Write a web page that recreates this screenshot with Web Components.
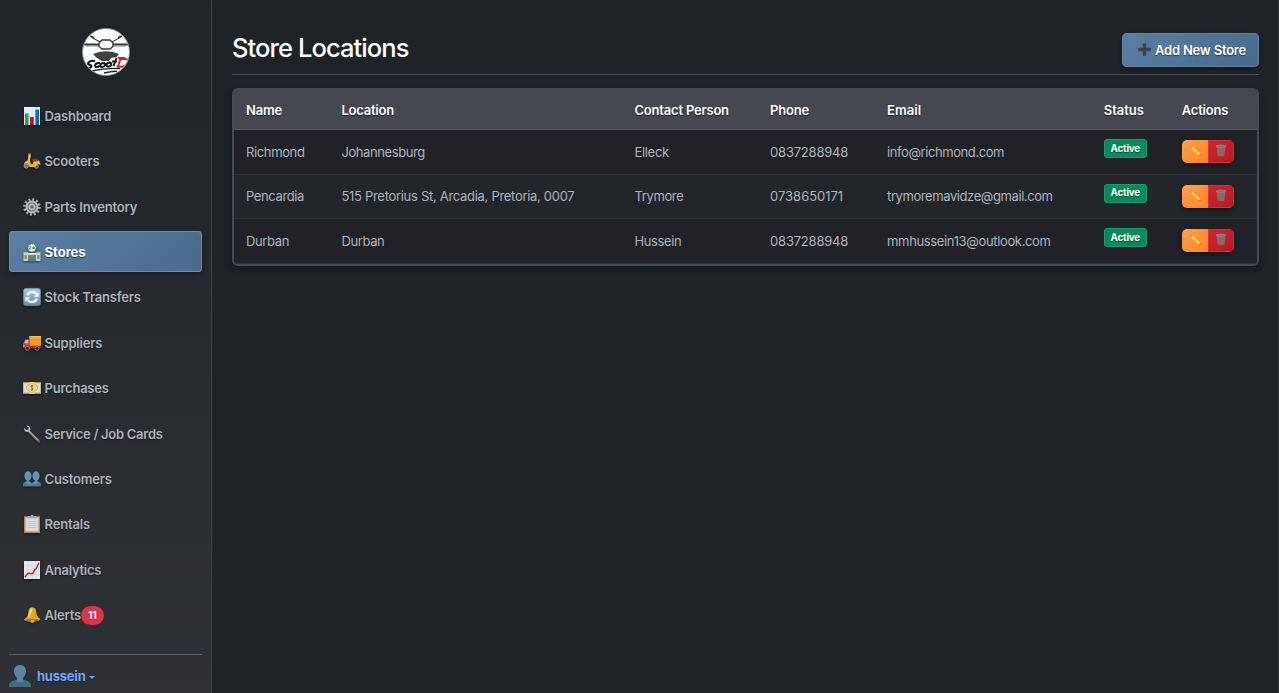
<!DOCTYPE html>
<html lang="en">
<head>
<meta charset="utf-8">
<title>Store Locations</title>
<style>
html,body{margin:0;height:100%;background:#1e2327;overflow:hidden}
body{font-family:Inter,"Liberation Sans",sans-serif;font-size:13px;color:#adb5bd}
</style>
</head>
<body>
<store-app></store-app>
<script>
const ICONS = {
bars:`<path fill="#e9eef5" d="M1 0h16v18H1z"/><path stroke="#c5ceda" stroke-width=".4" d="M1 4h16M1 8h16M1 12h16"/><path fill="#18b04b" d="M2 6.5h3.6V18H2z"/><path fill="#c8102e" d="M7 10h3.8v8H7z"/><path fill="#1861bd" d="M12.4 2.5H16V18h-3.6z"/>`,
scooter:`<circle cx="3.2" cy="14" r="2.1" fill="#666" stroke="#c9c9c9" stroke-width=".8"/><circle cx="13.3" cy="14.3" r="2" fill="#555" stroke="#bbb" stroke-width=".7"/><path d="M5 2.4 7.8 1.6M6.6 2.6 5.2 9 4 12" stroke="#9c7a36" stroke-width="1.2" fill="none"/><path fill="#f2b632" d="M5.6 2.6 8 2.5 7 8.2 7.8 12.2 10 12c0-2.4 1-4.3 3-4.5 2.6-.2 4.4 2.4 4.6 5.2L15 12.3 12 15H6.6L4.7 11.2 1 12.3c.4-2.3 2-3.4 3.6-3.7z"/><path fill="#7d3c20" d="M9 7.2c2-.8 4.5-1 6.6.5l-1 1.6-5 .2z"/><path fill="#fff2b0" d="M6 3.2h1.2v1.6H5.8z"/>`,
gear:`<circle cx="9" cy="9" r="7.5" fill="none" stroke="#a9b0b5" stroke-width="2.6" stroke-dasharray="2 1.93"/><circle cx="9" cy="9" r="5.5" fill="#60676c" stroke="#b8bec2" stroke-width="2"/><circle cx="9" cy="9" r="2.4" fill="#555b60" stroke="#c5c9cc" stroke-width="1.5"/><path d="M9 3.5v3.3M9 11.2v3.3M3.5 9h3.3M11.2 9h3.3" stroke="#aab0b4"/>`,
store:`<circle cx="9" cy="4.8" r="4.2" fill="#f7fbf6" stroke="#3c9b5a" stroke-width="1.1"/><path d="M6.2 4q1.5-1 1.5.3L6.2 6h1.7M10.8 3.2 9.4 5.4h2.2M11 4v2.4" stroke="#267c43" stroke-width=".9" fill="none"/><path fill="#d4d1b9" d="M.5 9.2h4l1 1h7l1-1h4V18H.5z"/><path fill="#4f6771" d="M5.3 12h7.4v6H5.3z"/><path stroke="#9eb4bc" stroke-width=".6" d="M7.2 12v6M9 12v6M10.8 12v6"/><path fill="#798184" d="M1.6 12h2v4h-2zM14.4 12h2v4h-2z"/><path fill="#eeead4" d="M4.6 10h8.8v1.6H4.6z"/>`,
sync:`<defs><linearGradient id="g" x2="0" y2="1"><stop stop-color="#a9cbe2"/><stop offset="1" stop-color="#5f8fb1"/></linearGradient></defs><rect x=".3" y=".3" width="17.4" height="17.4" rx="3" fill="url(#g)" stroke="#5d87a4" stroke-width=".5"/><g fill="none" stroke="#fff" stroke-width="2.1"><path d="M4.2 7.4a5.2 5.2 0 0 1 9-1.6M13.8 10.6a5.2 5.2 0 0 1-9 1.6"/></g><path fill="#fff" d="M15.6 4.2v4.6h-4.7zM2.4 13.8V9.2h4.7z"/>`,
truck:`<path fill="#f4a12c" d="M6.3 2H18v11H6.3z"/><path fill="#ffc05b" d="M6.3 2H18v1.4H6.3z"/><path stroke="#d37c1b" stroke-width=".5" d="M7 6h10.5M7 9h10.5"/><path fill="#e23b30" d="M2.2 5.2h4.5V14H0V9.8z"/><path fill="#9bd5e9" d="M2.8 6.1h2.5v3.1H1.4z"/><path fill="#d51f20" d="M0 11.6h18v2.6H0z"/><path fill="#f7d9b8" d="M0 11.4h1.6v1.1H0z"/><circle cx="4.3" cy="14.4" r="2" fill="#272a2d" stroke="#919aa0" stroke-width=".8"/><circle cx="14" cy="14.4" r="2" fill="#272a2d" stroke="#919aa0" stroke-width=".8"/>`,
money:`<path fill="#b9b99e" d="M0 3.2h18v11.6H0z"/><path fill="#e0dfc8" d="M.9 4.3h16.2v9H.9z"/><ellipse cx="9" cy="8.8" rx="6.2" ry="4.2" fill="#a7ad91"/><ellipse cx="9" cy="8.8" rx="5.2" ry="3.5" fill="#d8dac7"/><path fill="#f6cd55" d="M6.2 3h5.6v12H6.2z"/><circle cx="9" cy="8.8" r="2.6" fill="#ffeaa0"/><path d="M10.5 7.2c-3-1.4-3.8 1-1.5 1.6s1.5 2.8-1.5 1.6M9 6v5.7" stroke="#6c5724" stroke-width=".8" fill="none"/>`,
wrench:`<path d="m6.2 6.6 9.6 9.5" stroke="#777e84" stroke-width="2.5" stroke-linecap="round"/><path d="m6 6.1 9.4 9.3" stroke="#b4babd" stroke-width=".9"/><path d="M1 2.7 3.4 5l1.8-.5.4-1.8L3.5.7C6 .4 8 2.4 7.3 4.9L5.4 6.8C3 7.7.5 5.6 1 2.7z" fill="#aeb7bd"/><circle cx="16.1" cy="16.4" r="1.1" fill="#7c4e50"/>`,
people:`<g fill="#6292b4"><ellipse cx="5" cy="6" rx="3.6" ry="4.7"/><ellipse cx="13" cy="6" rx="3.6" ry="4.7"/><path d="M3.6 9h2.8v2.4c1.6.7 2.3 1 2.6 2 .3-1 1-1.3 2.6-2V9h2.8v2.4c2.8 1 3.6 1.5 3.6 4.8H0c0-3.3.8-3.8 3.6-4.8z"/></g><path d="M0 16.2c0-2.2.7-3.2 2.3-4 2 2.4 4.8 2 6.7.8 2 1.2 4.8 1.5 6.7-.8 1.7.8 2.3 1.8 2.3 4z" fill="#477b9f"/>`,
clipboard:`<path fill="#b28a62" d="M1 1.2h16V18H1z"/><path fill="#d9dbde" d="M2.5 2.5h13v14h-13z"/><path fill="#c3c6c9" d="M5 6h8v1H5zm0 2h8v1H5zm0 2h8v1H5zm0 2h8v1H5z"/><path fill="#a3aaae" d="M4.8 1.3h2.7a1.5 1.5 0 0 1 3 0h2.7v2.2H4.8z"/>`,
chart:`<path fill="#e3e9ee" d="M1 0h16v18H1z"/><path stroke="#bdc8d1" stroke-width=".4" d="M1 4.5h16M1 9h16M1 13.5h16M5 0v18M9 0v18M13 0v18"/><path d="m1.8 16.2 3-3.9 5 .3 2-4.2 1.4-.6 2.7-6" fill="none" stroke="#c91f32" stroke-width="1.4"/>`,
bell:`<path fill="#dfa62c" d="M9.3 1.2c2.7.1 3.6 1.9 3.9 4.7.4 3.4 1.1 4.7 3.7 6.5.6.5.3 1-.4 1.5-3.8 2.2-10.3 2.2-14.8.5-.8-.4-.7-1 0-1.4C4.2 11.3 5 9.5 5.3 6 5.6 2.8 6.8 1.1 9.3 1.2z"/><path fill="#ffe393" d="M8 2.6C6.6 4 6.7 8.3 5.2 11.7c2-1.8 3.3-5.2 4.1-8.8z"/><ellipse cx="9.2" cy="14.1" rx="7" ry="1.3" fill="#a87018"/><ellipse cx="9.4" cy="15.5" rx="2" ry="1.4" fill="#d9a640"/>`,
user:`<path fill="#5b86a0" d="M9 0c3.2 0 4.9 2.3 4.9 5.2 0 2.3-.9 4.3-2.4 5.3v1.7c4.5.8 6.5 2 6.5 5.8H0c0-3.8 2-5 6.5-5.8v-1.7C5 9.500 4.100 7.500 4.100 5.200 4.100 2.300 5.800 0 9 0z"/><path fill="#426b84" d="M0 18c0-3 1-4.300 4.300-5.300 2.900 2 6.500 2 9.400 0C17 13.700 18 15 18 18z"/>`,
plus:`<path fill="#3e4448" d="M7 2.300q0-.8.8-.8h2.400q.8 0 .8.800V7h4.700q.8 0 .8.800v2.400q0 .8-.8.800H11v4.700q0 .8-.8.800H7.800q-.8 0-.8-.8V11H2.300q-.8 0-.8-.8V7.800q0-.8.800-.8H7z"/>`,
pencil:`<path fill="#f4c23d" d="m5.300 2.900 10.500 9.500-3.200 3.100L2.500 5.500z"/><path stroke="#ffe48a" stroke-width="1.200" d="m4.800 4.500 9.500 9"/><path fill="#d88491" d="M1.200 3.300q-.4-1.500 1.300-2.100 1.200-.2 2 .8L1.900 4.700z"/><path fill="#9ba9ad" d="M3.700 1.500 5.700 3.300 2.900 6 1.200 4.200z"/><path fill="#edca9a" d="m15.800 12.400 1.300 4.200-4.500-1.100z"/><path fill="#333" d="m16.600 15 .6 1.800-1.800-.5z"/>`,
trash:`<path fill="#965c63" d="M2.200 3h13.600l-1.700 14q-5 1.600-10.200 0z"/><g fill="none" stroke="#80777c" stroke-width=".7"><path d="m4.500 4 1.600 13M8 4l.4 13.500M11.300 4l-.8 13.500M14 4l-2 13M3 7h12M3.400 10.500h11.200M3.800 14h10.300"/></g><ellipse cx="9" cy="2.600" rx="7.500" ry="1.700" fill="#757176" stroke="#a0979b" stroke-width=".8"/>`
};

function define(name, css, html, after) {
  const t = document.createElement('template');
  t.innerHTML = `<style>${css}</style>${html}`;
  customElements.define(name, class extends HTMLElement {
    connectedCallback() {
      if (this.shadowRoot) return;
      this.attachShadow({mode:'open'}).append(t.content.cloneNode(true));
      if (after) after(this, this.shadowRoot);
    }
  });
}

/* Text label; the optional w attribute sets its advance width through tracking. */
define('ui-label', `:host{display:inline-block;white-space:nowrap}span{display:inline-block}`, `<span><slot></slot></span>`, (el, root) => {
  const w = parseFloat(el.getAttribute('w'));
  if (!w) return;
  const s = root.querySelector('span');
  const n = el.textContent.length;
  s.style.letterSpacing = ((w - s.getBoundingClientRect().width) / n) + 'px';
});

define('ui-icon', `:host{display:block;width:18px;height:18px;flex:none}svg{display:block;width:100%;height:100%;overflow:visible}`, `<svg viewBox="0 0 18 18"></svg>`, (el, root) => {
  root.querySelector('svg').innerHTML = ICONS[el.getAttribute('name')];
});

define('brand-logo', `:host{display:block;width:48px;height:48px;margin:28px auto 0}svg{display:block}`, `
<svg width="48" height="48" viewBox="0 0 48 48"><defs><clipPath id="c"><circle cx="24" cy="24" r="23"/></clipPath></defs>
<circle cx="24" cy="24" r="23.500" fill="#fff" stroke="#8c9194"/>
<g clip-path="url(#c)"><path d="M0 16.500h18M30 16.500h18" stroke="#333" stroke-width="2"/><path d="M4 18h14M30 18h14" stroke="#888"/><path d="m9 9 9 5M39 9l-9 5" stroke="#444" stroke-width="1.200"/><path d="m8 8 4 1.500M40 8l-4 1.500" stroke="#333" stroke-width="1.600"/><path d="M20 12h8l3 3v3.500L28 21h-8l-3-2.500V15z" fill="#fff" stroke="#333" stroke-width="1.300"/>
<path d="M11 26q6-2.800 13-2.700Q31 23.200 37 26l-2.500 3.200-5 .5-3 3.300H20l-5.500-3.300z" fill="#414141"/>
<path d="M13 33.200q-5-1.200-7 1.800c-1 2 4.500 1.600 3.500 3.600-1.500 2.300-6 1.300-7 .2M18 35q-4.500-.5-5 2.500c0 2 3 1.700 4.400.2M21.500 35c-4 .3-4.200 4.300-1.200 4 3-.2 4-4 1.200-4M27.500 34.500c-3.600.2-4 4.200-1 4 3 0 4-4 1-4M34.500 30l-3 8.200M30 33.500h5" fill="none" stroke="#171717" stroke-width="2"/>
<path d="M38.500 31h5.500q3.500 1 1 4.500-1.500 3-6 3.300h-3.200z" fill="#fff" stroke="#d32132" stroke-width="2"/><path d="M36 30h7" stroke="#d32132" stroke-width="2"/><path d="M10 43q14-3.500 28-2.300M22 45q8-2 13-1.700" fill="none" stroke="#222" stroke-width="1.300"/></g></svg>`);

define('nav-item', `
:host{display:flex;align-items:center;box-sizing:border-box;height:41px;margin-bottom:4.400px;padding:1px 14px 0;border:0;border-radius:4px;font-weight:600;color:#adb5bd;text-shadow:0 1px 1px rgba(0,0,0,.6)}
:host([active]){background:linear-gradient(135deg,#5b7fa3,#486b8c);color:#fff;font-weight:700;box-shadow:inset 0 0 0 1px #6a8dab,0 2px 5px rgba(0,0,0,.35)}
ui-icon{margin-right:3.600px;filter:drop-shadow(0 1px 1px rgba(0,0,0,.5))}`,
`<ui-icon></ui-icon><slot></slot>`, (el, root) => {
  root.querySelector('ui-icon').replaceWith(Object.assign(document.createElement('ui-icon')));
  const i = document.createElement('ui-icon'); i.setAttribute('name', el.getAttribute('icon'));
  root.querySelector('ui-icon').replaceWith(i);
});

define('count-badge', `:host{display:flex;align-items:center;justify-content:center;width:23px;height:19px;border-radius:10px;background:#dc3545;color:#fff;font-size:9.800px;font-weight:700;text-shadow:0 1px 1px rgba(0,0,0,.3)}`, `<slot></slot>`);

define('user-menu', `
:host{display:flex;align-items:center;margin:0 9px;border-top:1px solid #5b5f65;padding-top:9px;height:25px;color:#6ea8fe;font-weight:700;text-shadow:0 1px 1px rgba(0,0,0,.5)}
ui-icon{width:22px;height:22px;margin-right:6px}
i{margin-left:3px;margin-top:2px;border:3px solid transparent;border-top-color:currentColor;border-bottom:0}`,
`<ui-icon name="user"></ui-icon><slot></slot><i></i>`);

define('side-bar', `
:host{display:flex;flex-direction:column;box-sizing:border-box;width:212px;flex:none;background:linear-gradient(180deg,#1f2428,#2f3136);border-right:1px solid #3f4348}
nav{margin:18.900px 9px 0;height:559px}`, `
<brand-logo></brand-logo>
<nav>
<nav-item icon="bars"><ui-label w="66.500">Dashboard</ui-label></nav-item>
<nav-item icon="scooter"><ui-label w="54.800">Scooters</ui-label></nav-item>
<nav-item icon="gear"><ui-label w="92.500">Parts Inventory</ui-label></nav-item>
<nav-item icon="store" active><ui-label w="41">Stores</ui-label></nav-item>
<nav-item icon="sync"><ui-label w="96">Stock Transfers</ui-label></nav-item>
<nav-item icon="truck"><ui-label w="57.500">Suppliers</ui-label></nav-item>
<nav-item icon="money"><ui-label w="64">Purchases</ui-label></nav-item>
<nav-item icon="wrench"><ui-label w="118">Service / Job Cards</ui-label></nav-item>
<nav-item icon="people"><ui-label w="67">Customers</ui-label></nav-item>
<nav-item icon="clipboard"><ui-label w="45.500">Rentals</ui-label></nav-item>
<nav-item icon="chart"><ui-label w="56.500">Analytics</ui-label></nav-item>
<nav-item icon="bell"><ui-label w="36.500">Alerts</ui-label><count-badge>11</count-badge></nav-item>
</nav>
<user-menu><ui-label w="48.500">hussein</ui-label></user-menu>`);

define('add-button', `
:host{display:flex;align-items:center;box-sizing:border-box;width:137px;height:34px;padding:0 13px 1px 15px;border-radius:5px;background:linear-gradient(135deg,#5b7fa3,#486b8c);box-shadow:inset 0 0 0 1px #6286a6,0 2px 4px rgba(0,0,0,.3);color:#fff;font-weight:600;text-shadow:0 1px 1px rgba(0,0,0,.5)}
ui-icon{width:15px;height:15px;margin-right:3px}`, `<ui-icon name="plus"></ui-icon><slot></slot>`);

define('page-header', `
:host{display:flex;justify-content:space-between;box-sizing:border-box;height:75px;padding-top:33px;border-bottom:1px solid #484d53}
h1{margin:0;font-size:25.500px;line-height:30px;font-weight:500;color:#fff}`, `<h1><ui-label w="176.500">Store Locations</ui-label></h1><slot></slot>`);

define('status-badge', `:host{display:flex;align-items:center;justify-content:center;box-sizing:border-box;width:43px;height:19px;border-radius:3px;background:#058a5c;border:1px solid #1d9b6e;color:#fff;font-size:9.800px;font-weight:700;text-shadow:0 1px 1px rgba(0,0,0,.4)}`, `<ui-label w="29.500"><slot></slot>Active</ui-label>`);

define('row-actions', `
:host{display:flex;width:52px;height:23px;border-radius:5px;overflow:hidden;box-shadow:0 2px 4px rgba(0,0,0,.4)}
div{flex:1;display:flex;align-items:center;justify-content:center;padding-bottom:2px}
.e{background:linear-gradient(135deg,#ffa24a,#f98425)}
.d{background:linear-gradient(135deg,#d22630,#b51821);box-shadow:inset 0 0 0 1px #cf3440}
ui-icon{width:12px;height:13px}`, `<div class="e"><ui-icon name="pencil"></ui-icon></div><div class="d"><ui-icon name="trash"></ui-icon></div>`);

const ROWS = [
 [['Richmond',58.500],['Johannesburg',83.500],['Elleck',34.500],['0837288948',78],['info@richmond.com',117]],
 [['Pencardia',58],['515 Pretorius St, Arcadia, Pretoria, 0007',233],['Trymore',49],['0738650171',73],['trymoremavidze@gmail.com',165.500]],
 [['Durban',43],['Durban',43],['Hussein',47],['0837288948',78],['mmhussein13@outlook.com',163.500]]
];
const HEADS = [['Name',36],['Location',52.500],['Contact Person',94.500],['Phone',39],['Email',34],['Status',40],['Actions',46.500]];
const lab = ([t,w]) => `<ui-label w="${w}">${t}</ui-label>`;

define('store-table', `
:host{display:block;margin-top:13px;box-sizing:border-box;height:178px;border:2px solid #464a52;border-radius:6px;overflow:hidden;box-shadow:0 3px 6px rgba(0,0,0,.3);background:#202227}
.r{display:grid;grid-template-columns:95.400px 293px 135.700px 117px 216.700px 78px 1fr;box-sizing:border-box;height:44.700px;border-bottom:1px solid #2c2f34;padding-left:12px;line-height:16px}
.r>*{margin-top:13.500px;justify-self:start}
.r:nth-of-type(odd){background:#22252a}
.h{height:40px;background:#454850!important;border-bottom-color:#585c63;color:#fff;font-weight:600;text-shadow:0 1px 1px rgba(0,0,0,.6)}
.h>*{margin-top:11.500px}
.r>status-badge{margin-top:9px}.r>row-actions{margin-top:10px}`,
`<div class="r h">${HEADS.map(lab).join('')}</div>` + ROWS.map(r => `<div class="r">${r.map(lab).join('')}<status-badge></status-badge><row-actions></row-actions></div>`).join(''));

define('store-app', `
:host{display:flex;height:693px;background:#1e2327}
main{flex:1;padding:0 19px 0 20px;min-width:0;border-right:1px solid #30353a;box-sizing:border-box}`,
`<side-bar></side-bar><main><page-header><add-button><ui-label w="91">Add New Store</ui-label></add-button></page-header><store-table></store-table></main>`);
</script>
</body>
</html>
